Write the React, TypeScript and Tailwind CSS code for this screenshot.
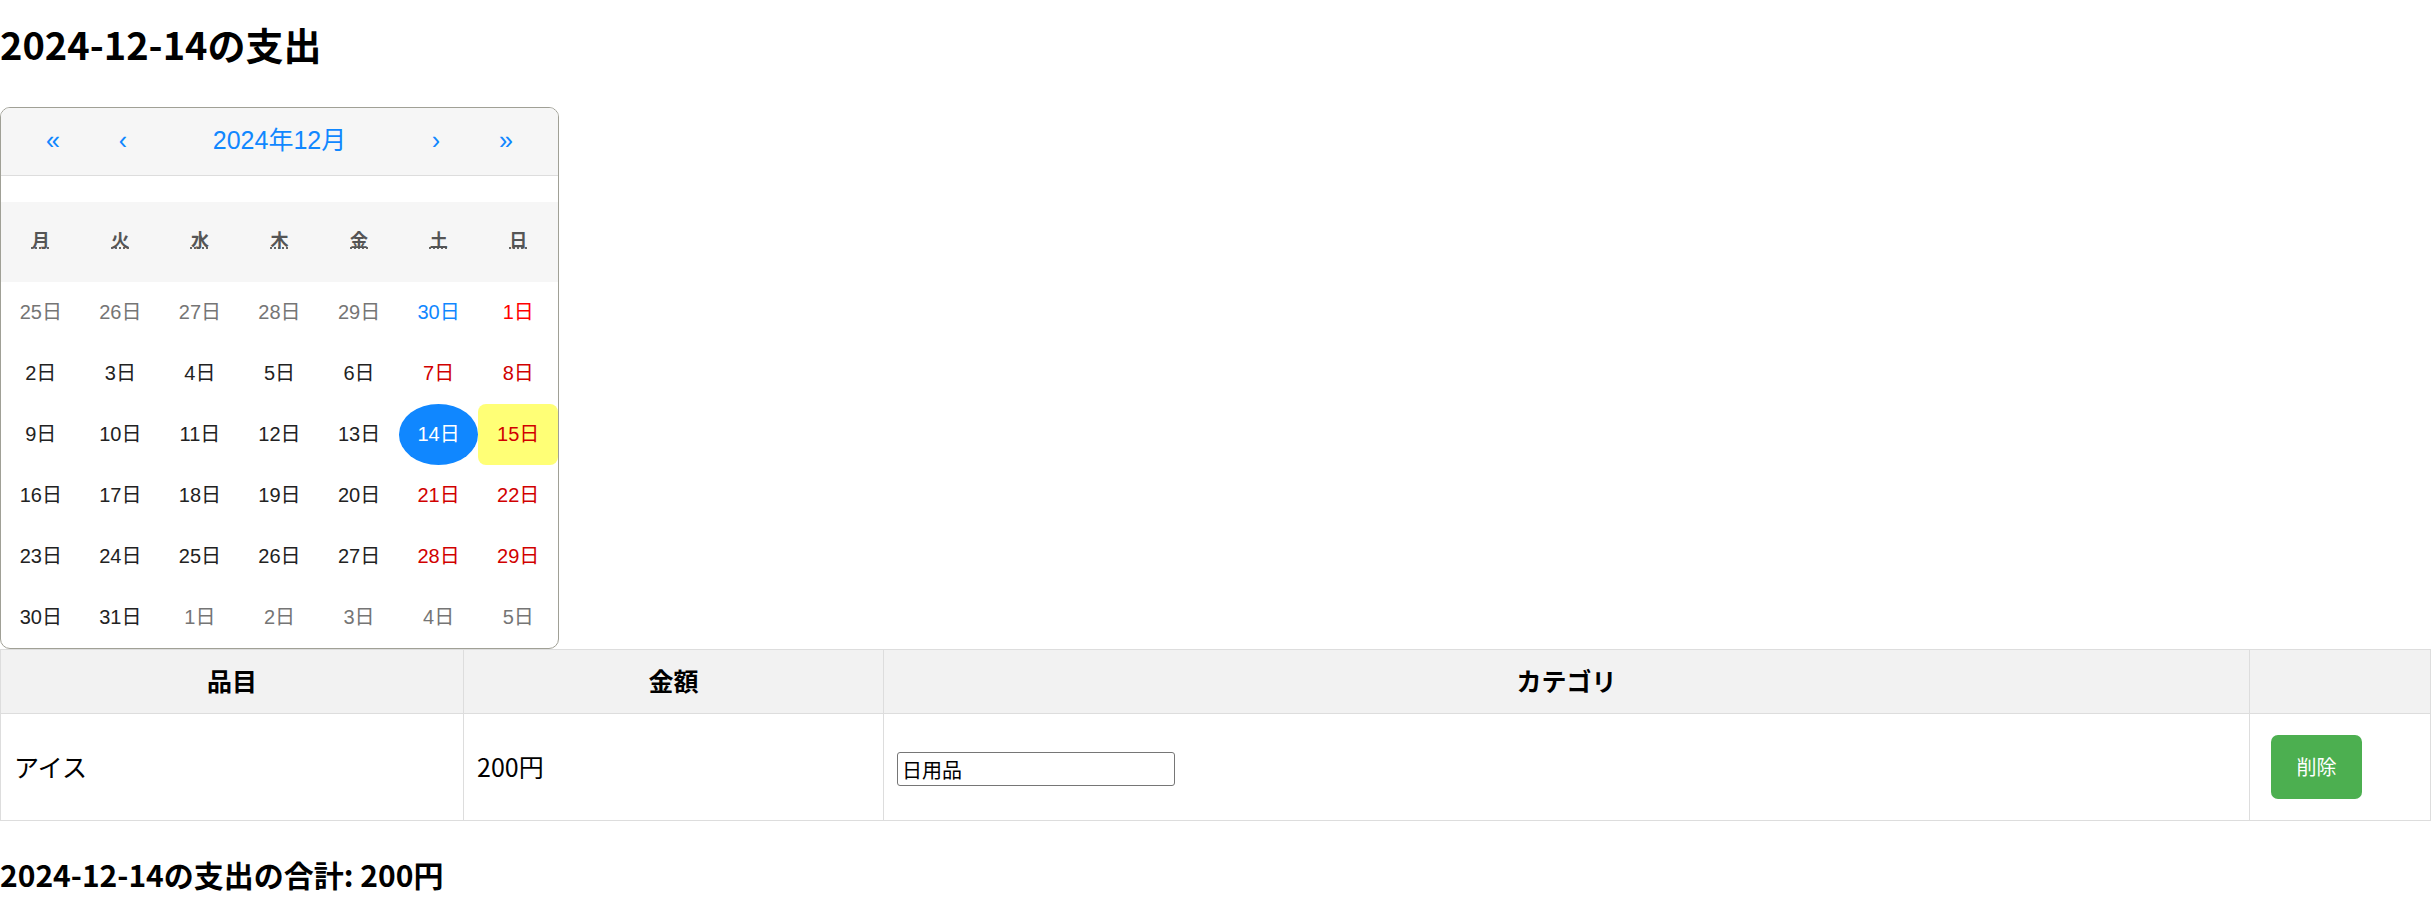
import React from "react";

type Day = { label: string; tone: "muted" | "normal" | "weekend" | "holiday" | "blue" | "selected" | "today" };

const weekdays = ["月", "火", "水", "木", "金", "土", "日"];

const days: Day[] = [
  ...[25, 26, 27, 28, 29].map((d) => ({ label: `${d}日`, tone: "muted" as const })),
  { label: "30日", tone: "blue" },
  { label: "1日", tone: "holiday" },
  ...[2, 3, 4, 5, 6].map((d) => ({ label: `${d}日`, tone: "normal" as const })),
  { label: "7日", tone: "weekend" },
  { label: "8日", tone: "weekend" },
  ...[9, 10, 11, 12, 13].map((d) => ({ label: `${d}日`, tone: "normal" as const })),
  { label: "14日", tone: "selected" },
  { label: "15日", tone: "today" },
  ...[16, 17, 18, 19, 20].map((d) => ({ label: `${d}日`, tone: "normal" as const })),
  { label: "21日", tone: "weekend" },
  { label: "22日", tone: "weekend" },
  ...[23, 24, 25, 26, 27].map((d) => ({ label: `${d}日`, tone: "normal" as const })),
  { label: "28日", tone: "weekend" },
  { label: "29日", tone: "weekend" },
  { label: "30日", tone: "normal" },
  { label: "31日", tone: "normal" },
  ...[1, 2, 3, 4, 5].map((d) => ({ label: `${d}日`, tone: "muted" as const })),
];

const toneClass: Record<Day["tone"], string> = {
  muted: "text-[#757575]",
  normal: "text-[#222]",
  weekend: "text-[#d10000]",
  holiday: "text-[#ff0000]",
  blue: "text-[#1087ff]",
  selected: "bg-[#1087ff] text-white rounded-[50%]",
  today: "bg-[#ffff76] text-[#d10000] rounded-[8px]",
};

function Calendar() {
  return (
    <div className="w-[559px] border border-[#a0a096] rounded-[10px] overflow-hidden bg-white font-['Liberation_Sans','Noto_Sans_CJK_JP',sans-serif]">
      <div className="h-[68px] flex items-center px-[17px] bg-[#f6f6f6] border-b border-[#dddddd] text-[#1087ff] text-[25px]">
        <button className="w-[70px] text-center">«</button>
        <button className="w-[70px] text-center">‹</button>
        <button className="flex-1 text-center">2024年12月</button>
        <button className="w-[70px] text-center">›</button>
        <button className="w-[70px] text-center">»</button>
      </div>
      <div className="h-[26px]"></div>
      <div className="grid grid-cols-7 h-[80px] items-center bg-[#f6f6f6] text-[#555] text-[18px] font-bold">
        {weekdays.map((w) => (
          <div key={w} className="text-center">
            <abbr className="underline decoration-dotted">{w}</abbr>
          </div>
        ))}
      </div>
      <div className="grid grid-cols-7">
        {days.map((d, i) => (
          <div key={i} className={`h-[61px] flex items-center justify-center text-[20px] ${toneClass[d.tone]}`}>
            {d.label}
          </div>
        ))}
      </div>
    </div>
  );
}

export default function App() {
  return (
    <div className="min-h-screen bg-white text-black font-['Noto_Sans_CJK_JP',sans-serif]">
      <h2 className="mt-[21px] mb-[40px] text-[38px] leading-[1.2] font-bold">2024-12-14の支出</h2>

      <Calendar />

      <table className="w-full table-fixed border-collapse">
        <colgroup>
          <col className="w-[463px]" />
          <col className="w-[420px]" />
          <col className="w-[1366px]" />
          <col />
        </colgroup>
        <thead>
          <tr className="h-[64px] bg-[#f2f2f2] text-[25px]">
            <th className="border border-[#dddddd] font-bold">品目</th>
            <th className="border border-[#dddddd] font-bold">金額</th>
            <th className="border border-[#dddddd] font-bold">カテゴリ</th>
            <th className="border border-[#dddddd]"></th>
          </tr>
        </thead>
        <tbody>
          <tr className="h-[107px] text-[25px]">
            <td className="border border-[#dddddd] px-[13px]">アイス</td>
            <td className="border border-[#dddddd] px-[13px]">200円</td>
            <td className="border border-[#dddddd] px-[13px]">
              <input
                type="text"
                defaultValue="日用品"
                className="w-[278px] h-[34px] border border-[#767676] rounded-[3px] px-[4px] text-[20px] align-middle"
              />
            </td>
            <td className="border border-[#dddddd] px-[13px]">
              <button className="ml-[8px] w-[91px] h-[64px] bg-[#4caf50] text-white text-[20px] rounded-[7px]">
                削除
              </button>
            </td>
          </tr>
        </tbody>
      </table>

      <h3 className="mt-[35px] text-[30px] leading-[1.2] font-bold">2024-12-14の支出の合計: 200円</h3>
    </div>
  );
}
